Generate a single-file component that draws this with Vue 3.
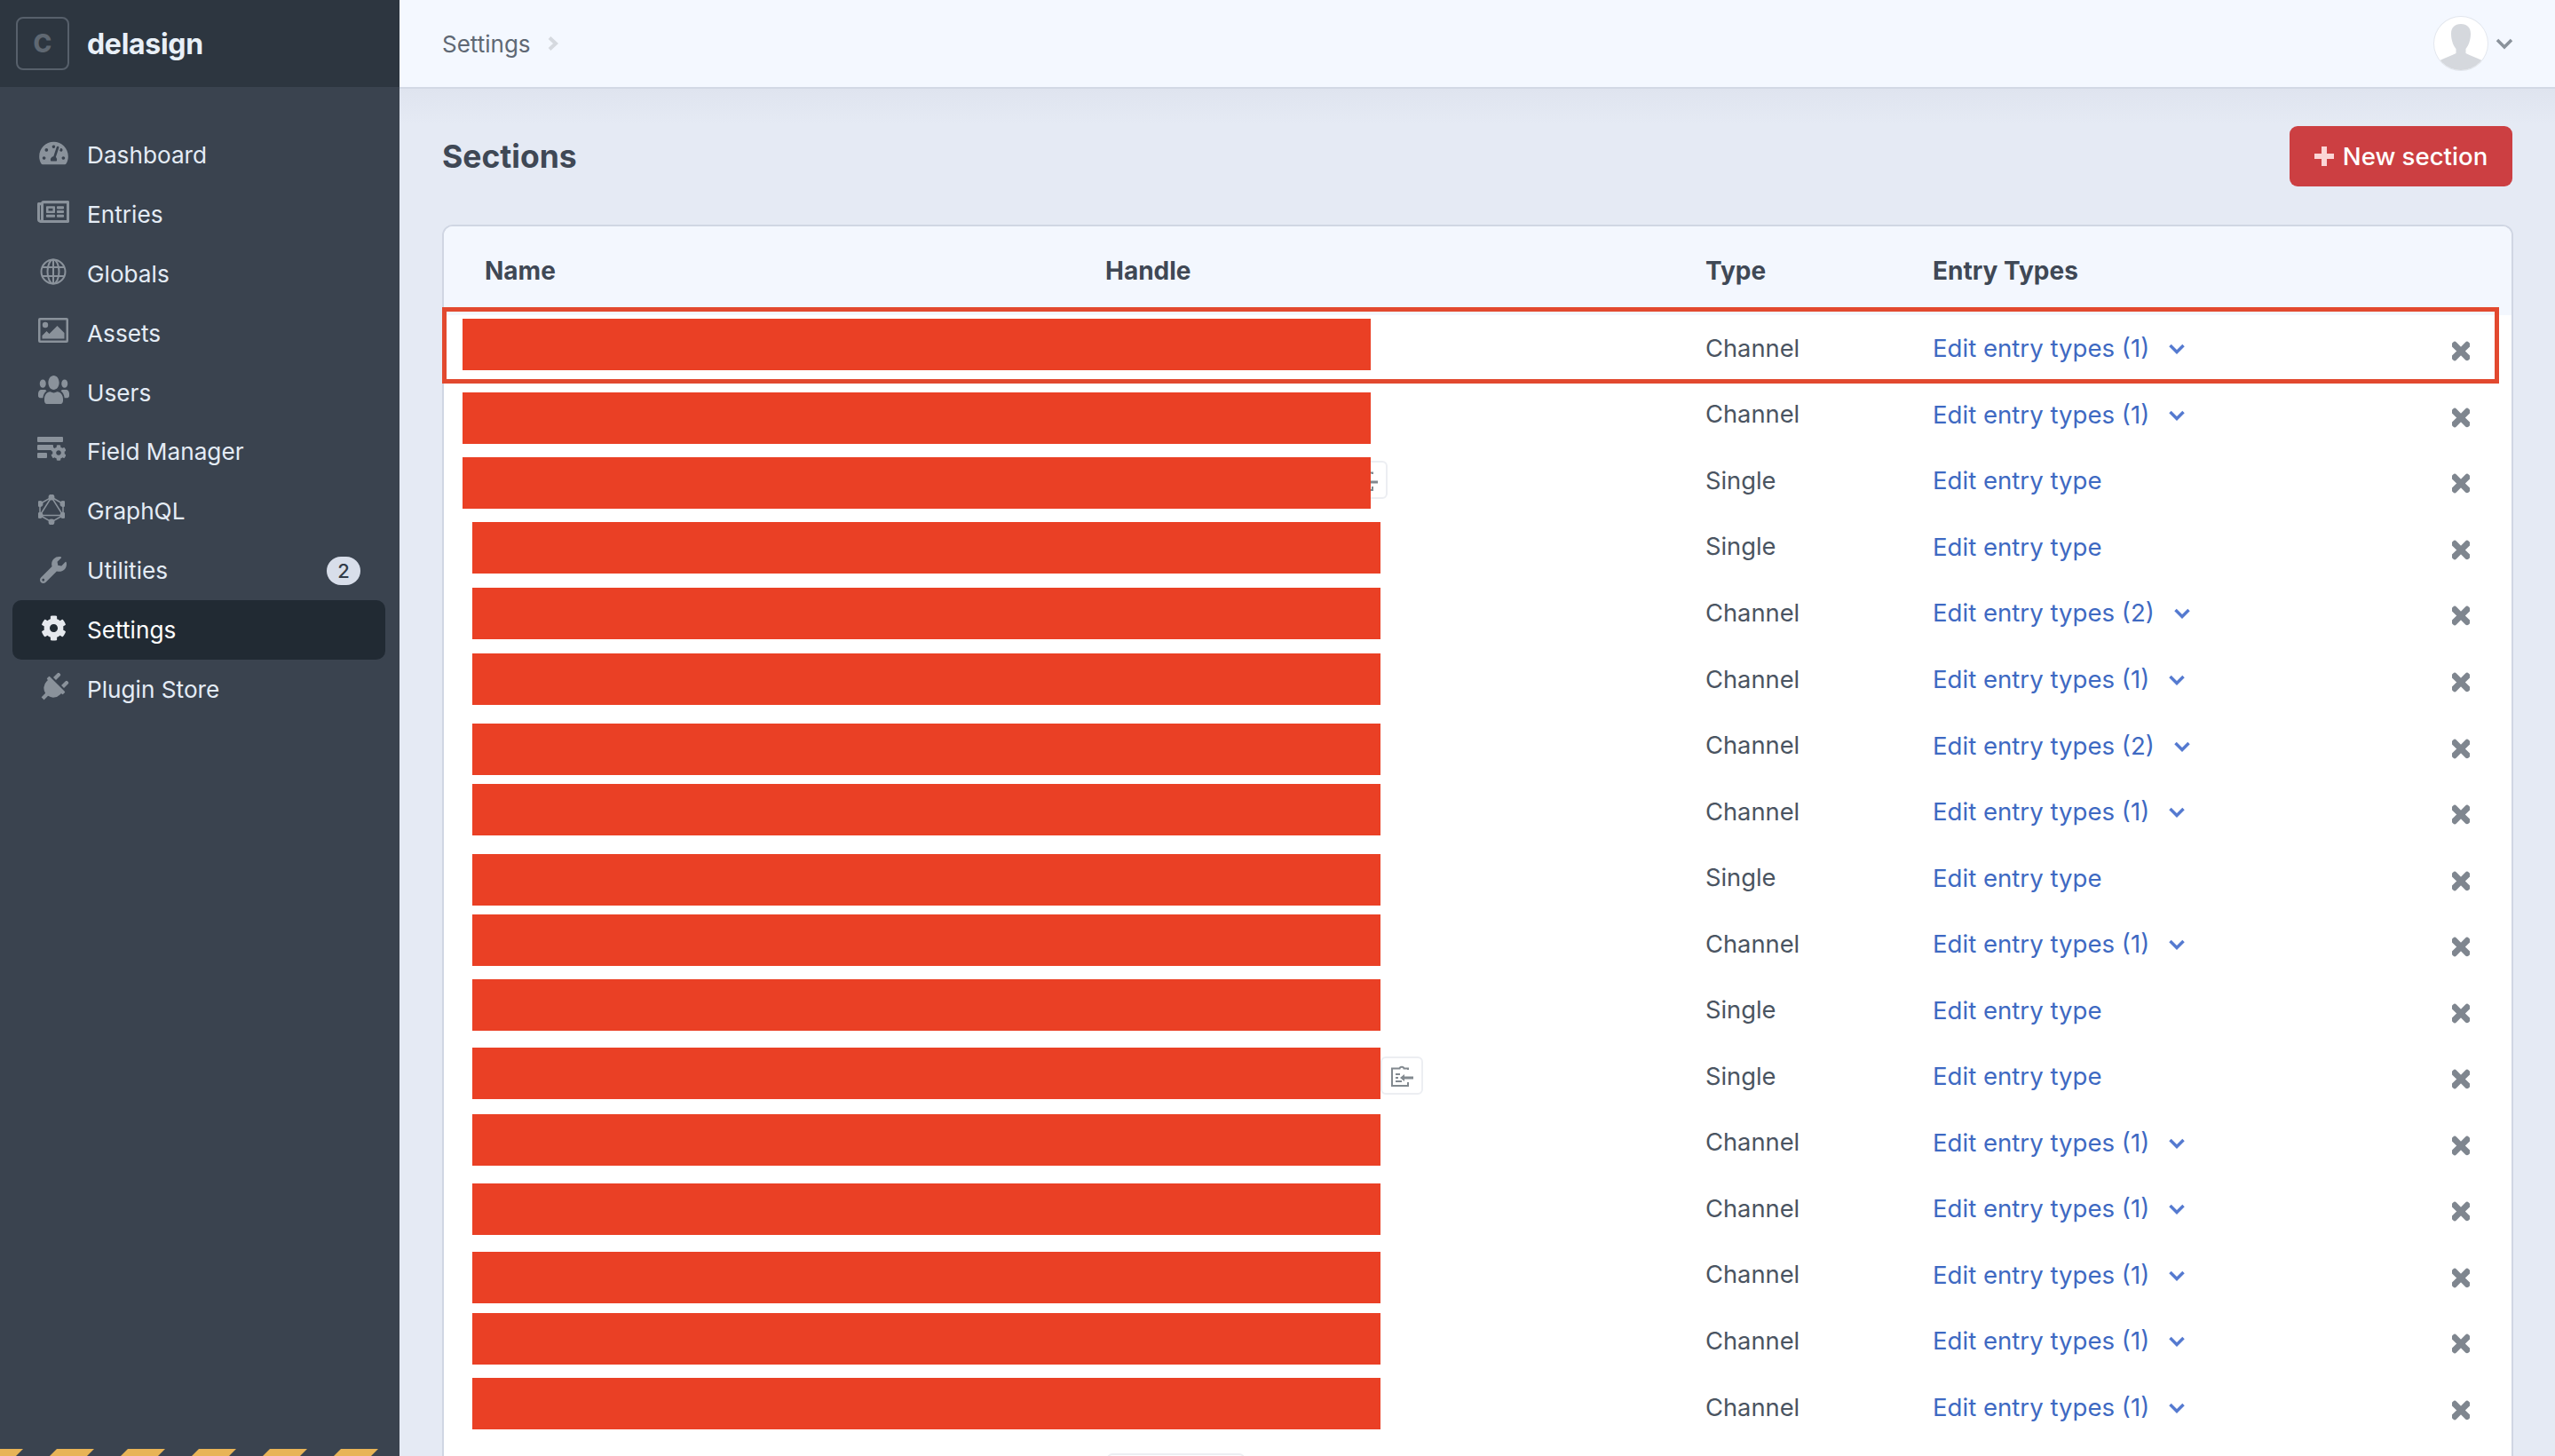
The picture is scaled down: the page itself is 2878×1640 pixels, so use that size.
<script setup>
import { computed } from 'vue'

const navItems = [
  { label: 'Dashboard', icon: 'dashboard' },
  { label: 'Entries', icon: 'entries' },
  { label: 'Globals', icon: 'globals' },
  { label: 'Assets', icon: 'assets' },
  { label: 'Users', icon: 'users' },
  { label: 'Field Manager', icon: 'fields' },
  { label: 'GraphQL', icon: 'graphql' },
  { label: 'Utilities', icon: 'utilities', badge: 2 },
  { label: 'Settings', icon: 'settings', active: true },
  { label: 'Plugin Store', icon: 'plugin' },
]

// type + number of entry types (0 = single)
const sections = [
  ['Channel', 1], ['Channel', 1], ['Single', 0], ['Single', 0], ['Channel', 2], ['Channel', 1],
  ['Channel', 2], ['Channel', 1], ['Single', 0], ['Channel', 1], ['Single', 0], ['Single', 0],
  ['Channel', 1], ['Channel', 1], ['Channel', 1], ['Channel', 1], ['Channel', 1],
].map(([type, count], i) => ({ id: i, type, count }))

// redacted name/handle blocks, relative to the card
const redactions = [
  [21, 104], [21, 187], [21, 260], [32, 333], [32, 407], [32, 481], [32, 560], [32, 628], [32, 707],
  [32, 775], [32, 848], [32, 925], [32, 1000], [32, 1078], [32, 1155], [32, 1224], [32, 1297],
].map(([left, top]) => ({ left, top }))

const copyButtons = [
  { left: 1015, top: 264 },
  { left: 1055, top: 935 },
]

const stripes = computed(() =>
  [-24, 56, 136, 216, 296, 376].map(x => `${x},8 ${x + 8},0 ${x + 50},0 ${x + 42},8`)
)
</script>

<template>
  <div class="cp">
    <aside class="sidebar">
      <div class="site">
        <div class="site__logo">C</div>
        <div class="site__name">delasign</div>
      </div>

      <nav class="nav">
        <a
          v-for="item in navItems"
          :key="item.label"
          class="nav__item"
          :class="{ 'nav__item--active': item.active }"
        >
          <span class="nav__icon" :class="`nav__icon--${item.icon}`">
            <svg v-if="item.icon === 'dashboard'" viewBox="0 0 576 512" width="33" height="29"><path d="M288 32C128.94 32 0 160.94 0 320c0 52.8 14.25 102.26 39.06 144.8 5.61 9.62 16.3 15.2 27.44 15.2h443c11.14 0 21.83-5.58 27.44-15.2C561.75 422.26 576 372.8 576 320c0-159.06-128.94-288-288-288zm0 64c14.71 0 26.58 10.13 30.32 23.65-1.11 2.26-2.64 4.23-3.45 6.67l-9.22 27.67c-5.13 3.49-10.97 6.01-17.64 6.01-17.67 0-32-14.33-32-32S270.33 96 288 96zM96 384c-17.67 0-32-14.33-32-32s14.33-32 32-32 32 14.33 32 32-14.33 32-32 32zm48-160c-17.67 0-32-14.33-32-32s14.33-32 32-32 32 14.33 32 32-14.33 32-32 32zm246.77-72.41l-61.33 184C343.13 347.33 352 364.54 352 384c0 11.72-3.38 22.55-8.88 32H232.88c-5.5-9.45-8.88-20.28-8.88-32 0-33.94 26.5-61.43 59.9-63.59l61.34-184.01c4.17-12.56 17.73-19.45 30.36-15.17 12.57 4.19 19.35 17.79 15.17 30.36zm14.66 57.2l15.52-46.55c3.47-1.29 7.13-2.23 11.05-2.23 17.67 0 32 14.33 32 32s-14.33 32-32 32c-11.38-.01-20.89-6.28-26.57-15.22zM480 384c-17.67 0-32-14.33-32-32s14.33-32 32-32 32 14.33 32 32-14.33 32-32 32z"/></svg>
            <svg v-else-if="item.icon === 'entries'" viewBox="0 64 576 384" width="37" height="25" preserveAspectRatio="none"><path d="M552 64H112c-20.858 0-38.643 13.377-45.248 32H24c-13.255 0-24 10.745-24 24v272c0 30.928 25.072 56 56 56h496c13.255 0 24-10.745 24-24V88c0-13.255-10.745-24-24-24zM48 392V144h16v248c0 4.411-3.589 8-8 8s-8-3.589-8-8zm480 8H111.422c.374-2.614.578-5.283.578-8V112h416v288zM172 280h136c6.627 0 12-5.373 12-12v-96c0-6.627-5.373-12-12-12H172c-6.627 0-12 5.373-12 12v96c0 6.627 5.373 12 12 12zm28-80h80v40h-80v-40zm-40 140v-24c0-6.627 5.373-12 12-12h136c6.627 0 12 5.373 12 12v24c0 6.627-5.373 12-12 12H172c-6.627 0-12-5.373-12-12zm192 0v-24c0-6.627 5.373-12 12-12h104c6.627 0 12 5.373 12 12v24c0 6.627-5.373 12-12 12H364c-6.627 0-12-5.373-12-12zm0-144v-24c0-6.627 5.373-12 12-12h104c6.627 0 12 5.373 12 12v24c0 6.627-5.373 12-12 12H364c-6.627 0-12-5.373-12-12zm0 72v-24c0-6.627 5.373-12 12-12h104c6.627 0 12 5.373 12 12v24c0 6.627-5.373 12-12 12H364c-6.627 0-12-5.373-12-12z"/></svg>
            <svg v-else-if="item.icon === 'globals'" viewBox="0 0 30 30" width="30" height="30" class="nav__stroke"><circle cx="15" cy="15" r="13.5"/><ellipse cx="15" cy="15" rx="6.5" ry="13.5"/><path d="M15 1.5v27M2.5 10h25M2.5 20h25"/></svg>
            <svg v-else-if="item.icon === 'assets'" viewBox="0 0 34 28" width="34" height="28"><path fill-rule="evenodd" d="M2 0h30a2 2 0 0 1 2 2v24a2 2 0 0 1-2 2H2a2 2 0 0 1-2-2V2a2 2 0 0 1 2-2zm.5 2.5v23h29v-23z"/><circle cx="8" cy="8" r="3.2"/><path d="M4.500 23.500v-3.500l5-5 3 3 9-9 8 8v6.500z"/></svg>
            <svg v-else-if="item.icon === 'users'" viewBox="0 32 640 448" width="35" height="32" preserveAspectRatio="none"><path d="M96 224c35.300 0 64-28.700 64-64s-28.700-64-64-64-64 28.700-64 64 28.700 64 64 64zm448 0c35.300 0 64-28.700 64-64s-28.700-64-64-64-64 28.700-64 64 28.700 64 64 64zm32 32h-64c-17.600 0-33.500 7.100-45.100 18.600 40.300 22.100 68.900 62 75.100 109.400h66c17.700 0 32-14.300 32-32v-32c0-35.300-28.700-64-64-64zm-256 0c61.900 0 112-50.100 112-112S381.900 32 320 32 208 82.100 208 144s50.100 112 112 112zm76.800 32h-8.300c-20.800 10-43.900 16-68.500 16s-47.600-6-68.500-16h-8.300C179.600 288 128 339.600 128 403.200V432c0 26.500 21.500 48 48 48h288c26.500 0 48-21.500 48-48v-28.800c0-63.600-51.600-115.200-115.200-115.200zm-223.700-13.400C161.500 263.100 145.600 256 128 256H64c-35.300 0-64 28.700-64 64v32c0 17.700 14.300 32 32 32h65.900c6.300-47.400 34.900-87.300 75.200-109.400z"/></svg>
            <svg v-else-if="item.icon === 'fields'" viewBox="0 0 32 28" width="32" height="28"><rect x="0" y="0" width="29" height="6" rx="1"/><rect x="0" y="9" width="18" height="6" rx="1"/><rect x="0" y="18" width="11" height="6" rx="1"/><g transform="translate(15 9) scale(0.0352)"><path d="M487.4 315.700l-42.600-24.600c4.300-23.200 4.300-47 0-70.200l42.600-24.600c4.900-2.800 7.100-8.600 5.500-14-11.100-35.600-30-67.800-54.700-94.600-3.800-4.100-10-5.100-14.800-2.300L380.800 110c-17.900-15.400-38.500-27.300-60.800-35.100V25.800c0-5.600-3.900-10.500-9.400-11.700-36.700-8.200-74.300-7.800-109.200 0-5.500 1.200-9.400 6.100-9.400 11.700V75c-22.200 7.900-42.800 19.800-60.800 35.100L88.700 85.500c-4.900-2.800-11-1.900-14.800 2.300-24.700 26.700-43.600 58.900-54.700 94.600-1.700 5.400.6 11.200 5.500 14L67.300 221c-4.300 23.200-4.300 47 0 70.200l-42.600 24.600c-4.900 2.800-7.100 8.600-5.500 14 11.100 35.600 30 67.800 54.700 94.600 3.800 4.100 10 5.100 14.800 2.300l42.600-24.600c17.900 15.400 38.500 27.300 60.800 35.100v49.200c0 5.600 3.900 10.500 9.400 11.700 36.700 8.200 74.300 7.800 109.200 0 5.500-1.200 9.400-6.100 9.400-11.700v-49.200c22.200-7.900 42.800-19.800 60.800-35.100l42.600 24.600c4.900 2.800 11 1.900 14.800-2.300 24.700-26.700 43.600-58.900 54.700-94.600 1.500-5.500-.7-11.300-5.600-14.100zM256 336c-44.100 0-80-35.900-80-80s35.900-80 80-80 80 35.900 80 80-35.900 80-80 80z"/></g></svg>
            <svg v-else-if="item.icon === 'graphql'" viewBox="0 0 30 34" width="30" height="34" class="nav__graph"><path d="M15 3 28 10.500v13L15 31 2 23.500v-13zM15 3 28 23.500H2z"/><circle cx="15" cy="3" r="2.700"/><circle cx="28" cy="10.500" r="2.700"/><circle cx="28" cy="23.500" r="2.700"/><circle cx="15" cy="31" r="2.700"/><circle cx="2" cy="23.500" r="2.700"/><circle cx="2" cy="10.500" r="2.700"/></svg>
            <svg v-else-if="item.icon === 'utilities'" viewBox="0 0 512 512" width="30" height="30"><path d="M507.730 109.100c-2.240-9.030-13.540-12.090-20.120-5.510l-74.360 74.360-67.880-11.310-11.310-67.880 74.360-74.360c6.620-6.620 3.430-17.900-5.660-20.160-47.380-11.740-99.550.91-136.580 37.930-39.640 39.640-50.550 97.100-34.050 147.200L18.740 402.760c-24.990 24.990-24.990 65.510 0 90.500 24.990 24.990 65.510 24.990 90.500 0l213.210-213.210c50.120 16.710 107.470 5.680 147.370-34.220 37.070-37.070 49.700-89.320 37.910-136.730zM64 472c-13.250 0-24-10.750-24-24 0-13.260 10.750-24 24-24s24 10.740 24 24c0 13.250-10.750 24-24 24z"/></svg>
            <svg v-else-if="item.icon === 'settings'" viewBox="0 0 512 512" width="29" height="29"><path d="M487.4 315.700l-42.600-24.600c4.300-23.200 4.300-47 0-70.200l42.600-24.600c4.900-2.800 7.100-8.600 5.500-14-11.100-35.600-30-67.800-54.700-94.600-3.800-4.100-10-5.100-14.800-2.300L380.800 110c-17.900-15.400-38.500-27.300-60.800-35.100V25.800c0-5.600-3.900-10.500-9.400-11.700-36.700-8.200-74.300-7.800-109.200 0-5.500 1.200-9.400 6.100-9.400 11.700V75c-22.200 7.900-42.800 19.800-60.800 35.100L88.700 85.500c-4.900-2.800-11-1.900-14.800 2.300-24.700 26.700-43.600 58.900-54.700 94.600-1.700 5.400.6 11.200 5.500 14L67.300 221c-4.300 23.200-4.300 47 0 70.200l-42.600 24.600c-4.900 2.800-7.100 8.600-5.500 14 11.100 35.600 30 67.800 54.700 94.600 3.800 4.100 10 5.100 14.800 2.300l42.600-24.600c17.900 15.400 38.500 27.300 60.800 35.100v49.200c0 5.600 3.900 10.500 9.400 11.700 36.700 8.200 74.300 7.800 109.200 0 5.500-1.200 9.400-6.100 9.400-11.700v-49.200c22.200-7.900 42.800-19.800 60.800-35.100l42.600 24.600c4.900 2.800 11 1.900 14.800-2.300 24.700-26.700 43.600-58.900 54.700-94.600 1.500-5.500-.7-11.300-5.600-14.100zM256 336c-44.100 0-80-35.900-80-80s35.900-80 80-80 80 35.900 80 80-35.900 80-80 80z"/></svg>
            <svg v-else viewBox="0 0 384 512" width="32" height="34" class="nav__plug"><path d="M320 32a32 32 0 0 0-64 0v96h64Zm48 128H16A16 16 0 0 0 0 176v32a16 16 0 0 0 16 16H32v32A160.070 160.070 0 0 0 160 412.800V512h64V412.800A160.070 160.070 0 0 0 352 256V224h16a16 16 0 0 0 16-16V176A16 16 0 0 0 368 160ZM128 32a32 32 0 0 0-64 0v96h64Z"/></svg>
          </span>
          <span class="nav__label">{{ item.label }}</span>
          <span v-if="item.badge" class="nav__badge">{{ item.badge }}</span>
        </a>
      </nav>

      <svg class="stripes" width="450" height="8" viewBox="0 0 450 8">
        <polygon v-for="points in stripes" :key="points" :points="points" />
      </svg>
    </aside>

    <div class="main">
      <header class="topbar">
        <div class="crumb">
          <span>Settings</span>
          <svg class="crumb__sep" viewBox="0 0 12 16" width="12" height="16"><path d="M2 1.500 9 8l-7 6.500" /></svg>
        </div>
        <div class="account">
          <div class="account__avatar">
            <svg viewBox="0 0 60 60" width="60" height="60">
              <path d="M30 8c-7 0-11 4-11 11 0 8 3 14 5.500 17v5c-5 3-13 5-18 8a29 29 0 0 0 47 0c-5-3-13-5-18-8v-5c2.500-3 5.500-9 5.500-17 0-7-4-11-11-11z" />
            </svg>
          </div>
          <svg class="account__caret" viewBox="0 0 20 14" width="20" height="14"><path d="M2 3l8 8 8-8" /></svg>
        </div>
      </header>

      <div class="content">
        <div class="page-head">
          <h1 class="page-head__title">Sections</h1>
          <button class="new-btn">
            <svg viewBox="0 0 22 22" width="22" height="22"><path d="M8 0h6v8h8v6h-8v8H8v-8H0V8h8z" /></svg>
            New section
          </button>
        </div>

        <div class="card">
          <div class="row row--head">
            <div>Name</div>
            <div>Handle</div>
            <div>Type</div>
            <div>Entry Types</div>
          </div>

          <div v-for="section in sections" :key="section.id" class="row">
            <div></div>
            <div></div>
            <div class="row__type">{{ section.type }}</div>
            <div class="row__types">
              <a class="row__link">{{ section.count ? `Edit entry types (${section.count})` : 'Edit entry type' }}</a>
              <svg v-if="section.count" class="row__caret" viewBox="0 0 20 14" width="20" height="14"><path d="M2.500 3l7.500 7.500L17.500 3" /></svg>
            </div>
            <svg class="row__delete" viewBox="0 0 352 512" width="20" height="29"><path d="M242.720 256l100.070-100.070c12.280-12.280 12.280-32.190 0-44.480l-22.240-22.240c-12.280-12.280-32.190-12.280-44.480 0L176 189.280 75.930 89.210c-12.280-12.280-32.190-12.280-44.480 0L9.210 111.450c-12.280 12.280-12.280 32.190 0 44.480L109.280 256 9.210 356.070c-12.280 12.280-12.280 32.190 0 44.480l22.240 22.240c12.280 12.280 32.200 12.280 44.480 0L176 322.720l100.070 100.070c12.280 12.280 32.200 12.280 44.480 0l22.240-22.240c12.280-12.280 12.280-32.190 0-44.480L242.720 256z" /></svg>
          </div>

          <div
            v-for="btn in copyButtons"
            :key="btn.top"
            class="copy"
            :style="{ left: btn.left + 'px', top: btn.top + 'px' }"
          >
            <svg viewBox="0 0 26 26" width="26" height="26">
              <path class="copy__line" d="M20 6V4.500H15.500C15 2 11 2 10.500 4.500H2V24h18v-4" />
              <path class="copy__line" d="M6 11h5M6 15h3M6 19h7" />
              <path class="copy__arrow" d="M26 13.500H16V11l-5 4 5 4v-2.500h10z" />
            </svg>
          </div>

          <div class="highlight"></div>
          <div
            v-for="bar in redactions"
            :key="bar.top"
            class="redaction"
            :style="{ left: bar.left + 'px', top: bar.top + 'px' }"
          ></div>
          <div class="peek"></div>
        </div>
      </div>
    </div>
  </div>
</template>

<style scoped>
.cp {
  display: flex;
  height: 100vh;
  overflow: hidden;
  font-family: Inter, "Liberation Sans", sans-serif;
  font-size: 27.300px;
  color: #3f4855;
}

.sidebar {
  width: 450px;
  flex: none;
  display: flex;
  flex-direction: column;
  background: #3a434f;
}

.site {
  height: 98px;
  flex: none;
  display: flex;
  align-items: center;
  gap: 20px;
  padding-left: 18px;
  background: #2d3640;
}

.site__logo {
  width: 60px;
  height: 60px;
  box-sizing: border-box;
  display: flex;
  align-items: center;
  justify-content: center;
  border: 2px solid #57606b;
  border-radius: 8px;
  color: #5f6872;
  font-size: 28px;
  font-weight: 800;
}

.site__name {
  color: #e9f0f8;
  font-size: 32px;
  font-weight: 700;
  letter-spacing: -0.3px;
}

.nav {
  flex: 1;
  padding: 43px 16px 0 14px;
}

.nav__item {
  height: 66.900px;
  display: flex;
  align-items: center;
  padding: 0 28px;
  border-radius: 10px;
  color: #e4ecf6;
  font-size: 26.200px;
}

.nav__item--active {
  background: #212a33;
  color: #fff;
}

.nav__icon {
  width: 36px;
  height: 40px;
  flex: none;
  margin-right: 20px;
  display: flex;
  align-items: center;
  justify-content: center;
  fill: #8a929b;
  transform: translateY(-2px);
}

.nav__icon--entries,
.nav__icon--assets,
.nav__icon--users,
.nav__icon--fields {
  transform: translateY(-3px);
}

.nav__icon--utilities,
.nav__icon--plugin {
  transform: translateY(-1px);
}

.nav__icon--fields,
.nav__icon--graphql {
  margin-left: -2px;
  margin-right: 22px;
}

.nav__item--active .nav__icon {
  fill: #e6e9ee;
}

.nav__stroke {
  fill: none;
  stroke: #8a929b;
  stroke-width: 2;
}

.nav__graph {
  stroke: #8a929b;
  stroke-width: 1.500;
  fill: none;
}

.nav__graph circle {
  fill: #8a929b;
}

.nav__plug {
  transform: rotate(45deg);
}

.nav__label {
  flex: 1;
}

.nav__badge {
  width: 38px;
  height: 32px;
  display: flex;
  align-items: center;
  justify-content: center;
  border-radius: 16px;
  background: #d8deea;
  color: #323b47;
  font-size: 22px;
  font-weight: 500;
}

.stripes {
  flex: none;
  display: block;
  fill: #e8b456;
}

.main {
  flex: 1;
  min-width: 0;
  background: #e5eaf4;
}

.topbar {
  height: 98px;
  display: flex;
  align-items: center;
  justify-content: space-between;
  padding: 0 48px;
  background: #f4f8ff;
  border-bottom: 2px solid #d3d9e5;
}

.crumb {
  display: flex;
  align-items: center;
  gap: 19px;
  color: #5f6874;
  font-size: 26px;
}

.crumb__sep {
  fill: none;
  stroke: #d5d9df;
  stroke-width: 4;
}

.account {
  display: flex;
  align-items: center;
  gap: 9px;
  margin-right: -38px;
  transform: translateX(-37px);
}

.account__avatar {
  width: 60px;
  height: 60px;
  border-radius: 50%;
  background: #fff;
  box-shadow: 0 0 0 1px #e3e7ee;
  overflow: hidden;
}

.account__avatar svg {
  display: block;
  fill: #d5d8dd;
}

.account__caret {
  fill: none;
  stroke: #8a929b;
  stroke-width: 3.500;
}

.content {
  padding: 0 47px 0 48px;
  background: linear-gradient(#dfe4ef, #e5eaf4 40px);
}

.page-head {
  display: flex;
  align-items: center;
  justify-content: space-between;
  padding: 42px 1px 43px 0;
}

.page-head__title {
  margin: 0;
  color: #3f4855;
  font-size: 35.500px;
  font-weight: 700;
}

.new-btn {
  width: 251px;
  height: 68px;
  display: flex;
  align-items: center;
  justify-content: center;
  gap: 10px;
  border: none;
  border-radius: 9px;
  background: #cc3f42;
  color: #fff;
  font: inherit;
  font-size: 27.600px;
  font-weight: 500;
}

.new-btn svg {
  fill: #fbd5d6;
}

.card {
  position: relative;
  height: 1700px;
  border: 2px solid #d0d6e3;
  border-radius: 12px 12px 0 0;
  background: #fff;
}

.row {
  height: 74.560px;
  display: grid;
  grid-template-columns: 699px 676px 256px 1fr 68px;
  align-items: center;
  padding-left: 46px;
}

.row--head {
  height: 100px;
  border-radius: 10px 10px 0 0;
  background: #f3f7fe;
  color: #3f4855;
  font-size: 28px;
  font-weight: 700;
}

.row__type {
  color: #4a5461;
}

.row__types {
  display: flex;
  align-items: center;
  gap: 21px;
}

.row__link {
  color: #3e69c2;
  font-size: 27.600px;
}

.row__caret {
  fill: none;
  stroke: #557ad0;
  stroke-width: 3.500;
  margin-top: 2px;
}

.row__delete {
  fill: #7f868f;
  stroke: #7f868f;
  stroke-width: 28;
  margin-top: 7px;
  margin-left: 1px;
}

.copy {
  position: absolute;
  width: 48px;
  height: 43px;
  box-sizing: border-box;
  display: flex;
  align-items: center;
  justify-content: center;
  border: 2px solid #eceef2;
  border-radius: 6px;
  background: #fff;
}

.copy__line {
  fill: none;
  stroke: #82898f;
  stroke-width: 2;
}

.copy__arrow {
  fill: #82898f;
}

.highlight {
  position: absolute;
  left: -2px;
  top: 91px;
  width: 2317px;
  height: 86px;
  box-sizing: border-box;
  border: 5px solid #e2492f;
}

.redaction {
  position: absolute;
  width: 1023px;
  height: 58px;
  background: #ea4025;
}

.peek {
  position: absolute;
  left: 747px;
  top: 1382px;
  width: 155px;
  height: 20px;
  box-sizing: border-box;
  border: 2px solid #eceef2;
  border-radius: 6px;
}
</style>

<style>
html,
body {
  margin: 0;
  overflow: hidden;
}
</style>
